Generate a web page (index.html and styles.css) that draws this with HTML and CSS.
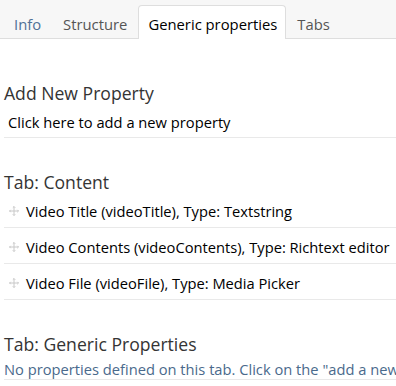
FILE: index.html
```html
<!DOCTYPE html>
<html lang="en">
<head>
  <meta charset="UTF-8" />
  <title>Document Type</title>
  <link rel="stylesheet" href="styles.css">
</head>
<body>
  <nav class="tabs">
    <a class="tab first">Info</a>
    <a class="tab">Structure</a>
    <a class="tab active">Generic properties</a>
    <a class="tab">Tabs</a>
  </nav>

  <main class="content">
    <section class="group">
      <h3>Add New Property</h3>
      <div class="row add">Click here to add a new property</div>
    </section>

    <section class="group">
      <h3>Tab: Content</h3>
      <div class="row">
        <svg class="handle" viewBox="0 0 10 10"><path d="M5 0.5v9M0.5 5h9M3.8 1.7L5 0.5l1.2 1.2M3.8 8.3L5 9.5l1.2-1.2M1.7 3.8L0.5 5l1.2 1.2M8.3 3.8L9.5 5l-1.2 1.2"/></svg>
        Video Title (videoTitle), Type: Textstring
      </div>
      <div class="row">
        <svg class="handle" viewBox="0 0 10 10"><path d="M5 0.5v9M0.5 5h9M3.8 1.7L5 0.5l1.2 1.2M3.8 8.3L5 9.5l1.2-1.2M1.7 3.8L0.5 5l1.2 1.2M8.3 3.8L9.5 5l-1.2 1.2"/></svg>
        Video Contents (videoContents), Type: Richtext editor
      </div>
      <div class="row">
        <svg class="handle" viewBox="0 0 10 10"><path d="M5 0.5v9M0.5 5h9M3.8 1.7L5 0.5l1.2 1.2M3.8 8.3L5 9.5l1.2-1.2M1.7 3.8L0.5 5l1.2 1.2M8.3 3.8L9.5 5l-1.2 1.2"/></svg>
        Video File (videoFile), Type: Media Picker
      </div>
    </section>

    <section class="group">
      <h3>Tab: Generic Properties</h3>
      <div class="row empty">No properties defined on this tab. Click on the "add a new property" link at the top to create a new property.</div>
    </section>
  </main>
</body>
</html>
```

FILE: styles.css
```css
* {
  margin: 0;
  padding: 0;
  box-sizing: border-box;
}

body {
  font-family: 'Open Sans', 'Noto Sans', sans-serif;
  color: #000;
  background: #fff;
  overflow: hidden;
}

.tabs {
  display: flex;
  background: #f7f7f7;
  border-bottom: 1px solid #dedede;
  height: 39px;
  padding: 5px 0 0 3px;
}

.tab {
  font-size: 14.8px;
  line-height: 20px;
  padding: 8px 10px 5px;
  color: #555;
  border: 1px solid transparent;
  border-bottom: none;
  border-radius: 4px 4px 0 0;
  white-space: nowrap;
}

.tab.first {
  color: #4f7196;
}

.tab.active {
  background: #fff;
  color: #000;
  border-color: #dedede;
  height: 34px;
  padding: 8px 8px 5px 9px;
}

.content {
  padding: 42px 0 0 4px;
}

.group {
  margin-bottom: 32px;
}

.group h3 {
  font-size: 17.6px;
  font-weight: 400;
  color: #343434;
  line-height: 24px;
}

.row {
  display: flex;
  align-items: center;
  font-size: 14.7px;
  line-height: 20px;
  padding: 9px 0 6px 4px;
  border-bottom: 1px solid #e9e9e9;
  white-space: nowrap;
}

h3 + .row {
  padding-top: 7px;
}

.add {
  padding-bottom: 5px;
}

.handle {
  width: 10px;
  height: 10px;
  margin: 0 7px 1px 1px;
  flex-shrink: 0;
  fill: none;
  stroke: #c8c8c8;
  stroke-width: 1;
}

.row.empty {
  padding: 3px 0 0 0;
  color: #4a6a8c;
}
```
